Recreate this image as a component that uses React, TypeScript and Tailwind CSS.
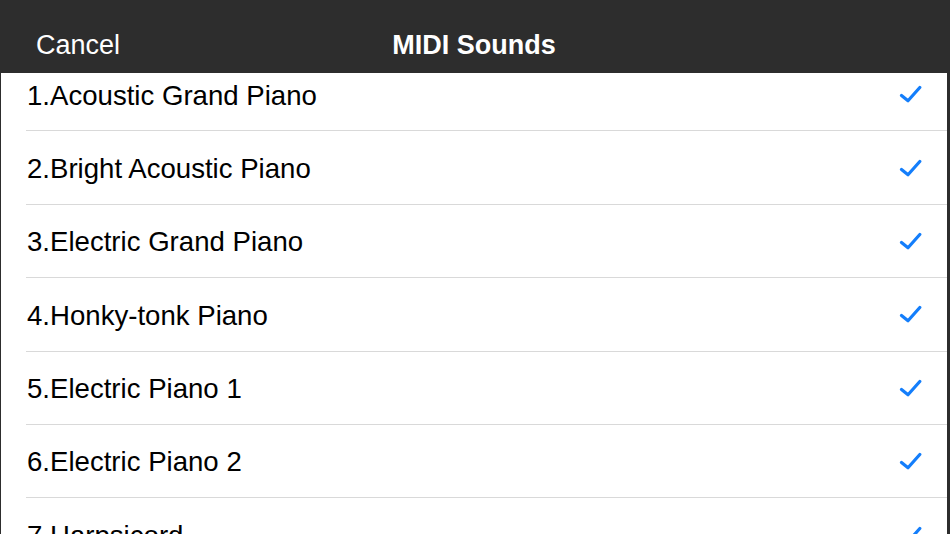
import React from "react";

const items = [
  "1.Acoustic Grand Piano",
  "2.Bright Acoustic Piano",
  "3.Electric Grand Piano",
  "4.Honky-tonk Piano",
  "5.Electric Piano 1",
  "6.Electric Piano 2",
  "7.Harpsicord",
  "8.Clavi",
];

function Check() {
  return (
    <svg width="24" height="20" viewBox="0 0 24 20" className="shrink-0">
      <polyline
        points="3.5,11.5 10,16.8 21.8,3.5"
        fill="none"
        stroke="#147efb"
        strokeWidth="3.2"
        strokeLinecap="round"
        strokeLinejoin="round"
      />
    </svg>
  );
}

export default function App() {
  return (
    <div
      className="w-[950px] h-[534px] overflow-hidden bg-white flex flex-col border-l border-r-[3px] border-[#2d2d2d]"
      style={{ fontFamily: '"Liberation Sans", Arial, sans-serif' }}
    >
      <div className="h-[73px] shrink-0 bg-[#2d2d2d] relative flex items-center pt-[18px]">
        <span className="pl-[35px] text-[27px] text-white">Cancel</span>
        <div className="absolute inset-0 flex items-center justify-center pt-[18px] pointer-events-none">
          <span className="text-[27px] font-bold text-white">MIDI Sounds</span>
        </div>
      </div>
      <div className="flex-1 overflow-hidden">
        <div className="-mt-[15px] pl-[25px]">
          {items.map((t) => (
            <div
              key={t}
              className="h-[73.4px] flex items-center justify-between border-b border-[#d9d9d9] pr-[25px]"
            >
              <span className="text-[27.6px] text-black pl-[1px] pt-[2px]">{t}</span>
              <Check />
            </div>
          ))}
        </div>
      </div>
    </div>
  );
}
